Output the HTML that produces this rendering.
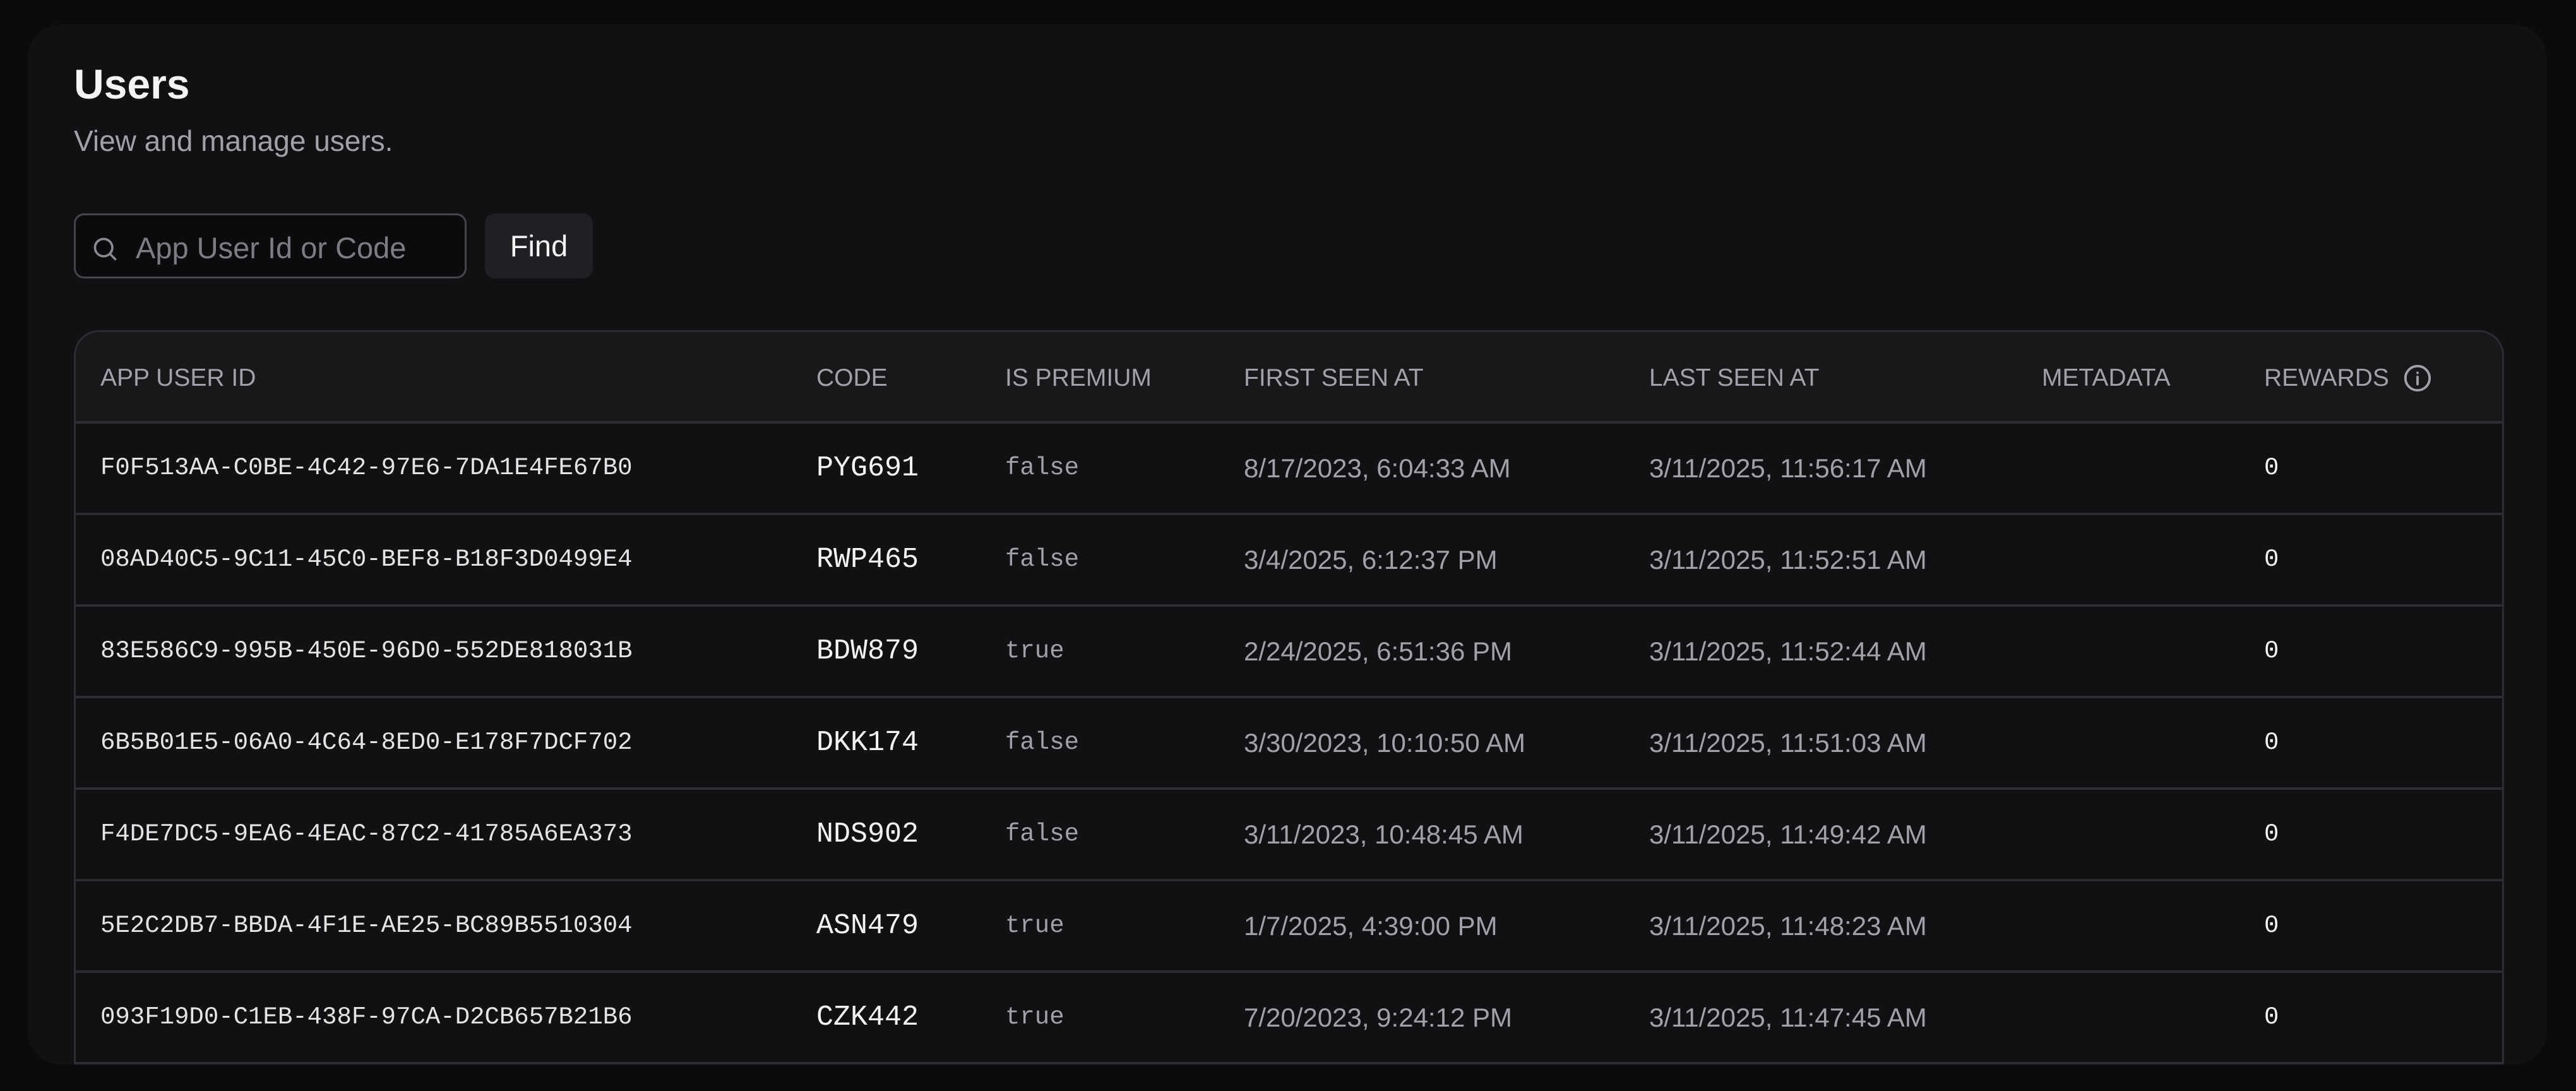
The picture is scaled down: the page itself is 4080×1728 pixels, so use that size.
<!DOCTYPE html>
<html><head><meta charset="utf-8"><style>
*{margin:0;padding:0;box-sizing:border-box}
html,body{width:4080px;height:1728px;background:#0b0b0d;overflow:hidden;font-family:"Liberation Sans",sans-serif;color:#f4f4f5}
.card{position:absolute;left:44px;top:39px;width:3989px;height:1647px;background:#111113;border-radius:52px;overflow:hidden}
h1{position:absolute;left:73px;top:56px;font-size:66px;font-weight:700;color:#f4f4f5}
.sub{position:absolute;left:73px;top:157px;font-size:46px;color:#a1a1aa}
.inp{position:absolute;left:73px;top:299px;width:622px;height:103px;border:3px solid #45454c;border-radius:16px;background:#0b0b0d}
.inp svg{position:absolute;left:24px;top:31px}
.inp span{position:absolute;left:95px;top:24px;font-size:47px;color:#7c7c84}
.btn{position:absolute;left:724px;top:299px;width:171px;height:103px;border-radius:16px;background:#202024;font-size:47px;text-align:center;line-height:103px;color:#f4f4f5}
.tbl{position:absolute;left:73px;top:484px;width:3849px;border:3px solid #2c2c31;border-radius:40px 40px 0 0;overflow:hidden}
.hd{height:145px;background:#18181b;border-bottom:4px solid #2c2c31;position:relative}
.row{height:145px;border-bottom:4px solid #2c2c31;position:relative}
.c{position:absolute;top:0;line-height:141px;white-space:nowrap}
.hd .c{font-size:39px;color:#a1a1aa;line-height:145px}
.id{font-family:"Liberation Mono",monospace;font-size:39px;color:#e4e4e7}
.code{font-family:"Liberation Mono",monospace;font-size:45px;color:#f4f4f5}
.bool{font-family:"Liberation Mono",monospace;font-size:39px;color:#a1a1aa}
.dt{font-size:42px;color:#a1a1aa}
.rw{font-family:"Liberation Mono",monospace;font-size:39px;color:#f4f4f5}
</style></head><body>
<div class="card">
<h1>Users</h1>
<div class="sub">View and manage users.</div>
<div class="inp"><svg width="44" height="44" viewBox="0 0 24 24" fill="none" stroke="#8a8a92" stroke-width="2" stroke-linecap="round"><circle cx="11" cy="11" r="7.5"/><path d="M16.5 16.5L21 21"/></svg><span>App User Id or Code</span></div>
<div class="btn">Find</div>
<div class="tbl">
<div class="hd">
<div class="c" style="left:39px">APP USER ID</div>
<div class="c" style="left:1173px">CODE</div>
<div class="c" style="left:1472px">IS PREMIUM</div>
<div class="c" style="left:1850px">FIRST SEEN AT</div>
<div class="c" style="left:2492px">LAST SEEN AT</div>
<div class="c" style="left:3114px">METADATA</div>
<div class="c" style="left:3466px">REWARDS</div>
<svg style="position:absolute;left:3686px;top:50px" width="46" height="46" viewBox="0 0 24 24" fill="none" stroke="#a1a1aa" stroke-width="2" stroke-linecap="round"><circle cx="12" cy="12" r="10"/><path d="M12 11v6M12 7.5v.1"/></svg>
</div>
<div class="row"><div class="c id" style="left:39px">F0F513AA-C0BE-4C42-97E6-7DA1E4FE67B0</div><div class="c code" style="left:1173px">PYG691</div><div class="c bool" style="left:1472px">false</div><div class="c dt" style="left:1850px">8/17/2023, 6:04:33 AM</div><div class="c dt" style="left:2492px">3/11/2025, 11:56:17 AM</div><div class="c rw" style="left:3466px">0</div></div>
<div class="row"><div class="c id" style="left:39px">08AD40C5-9C11-45C0-BEF8-B18F3D0499E4</div><div class="c code" style="left:1173px">RWP465</div><div class="c bool" style="left:1472px">false</div><div class="c dt" style="left:1850px">3/4/2025, 6:12:37 PM</div><div class="c dt" style="left:2492px">3/11/2025, 11:52:51 AM</div><div class="c rw" style="left:3466px">0</div></div>
<div class="row"><div class="c id" style="left:39px">83E586C9-995B-450E-96D0-552DE818031B</div><div class="c code" style="left:1173px">BDW879</div><div class="c bool" style="left:1472px">true</div><div class="c dt" style="left:1850px">2/24/2025, 6:51:36 PM</div><div class="c dt" style="left:2492px">3/11/2025, 11:52:44 AM</div><div class="c rw" style="left:3466px">0</div></div>
<div class="row"><div class="c id" style="left:39px">6B5B01E5-06A0-4C64-8ED0-E178F7DCF702</div><div class="c code" style="left:1173px">DKK174</div><div class="c bool" style="left:1472px">false</div><div class="c dt" style="left:1850px">3/30/2023, 10:10:50 AM</div><div class="c dt" style="left:2492px">3/11/2025, 11:51:03 AM</div><div class="c rw" style="left:3466px">0</div></div>
<div class="row"><div class="c id" style="left:39px">F4DE7DC5-9EA6-4EAC-87C2-41785A6EA373</div><div class="c code" style="left:1173px">NDS902</div><div class="c bool" style="left:1472px">false</div><div class="c dt" style="left:1850px">3/11/2023, 10:48:45 AM</div><div class="c dt" style="left:2492px">3/11/2025, 11:49:42 AM</div><div class="c rw" style="left:3466px">0</div></div>
<div class="row"><div class="c id" style="left:39px">5E2C2DB7-BBDA-4F1E-AE25-BC89B5510304</div><div class="c code" style="left:1173px">ASN479</div><div class="c bool" style="left:1472px">true</div><div class="c dt" style="left:1850px">1/7/2025, 4:39:00 PM</div><div class="c dt" style="left:2492px">3/11/2025, 11:48:23 AM</div><div class="c rw" style="left:3466px">0</div></div>
<div class="row"><div class="c id" style="left:39px">093F19D0-C1EB-438F-97CA-D2CB657B21B6</div><div class="c code" style="left:1173px">CZK442</div><div class="c bool" style="left:1472px">true</div><div class="c dt" style="left:1850px">7/20/2023, 9:24:12 PM</div><div class="c dt" style="left:2492px">3/11/2025, 11:47:45 AM</div><div class="c rw" style="left:3466px">0</div></div>
</div>
</div>
</body></html>
